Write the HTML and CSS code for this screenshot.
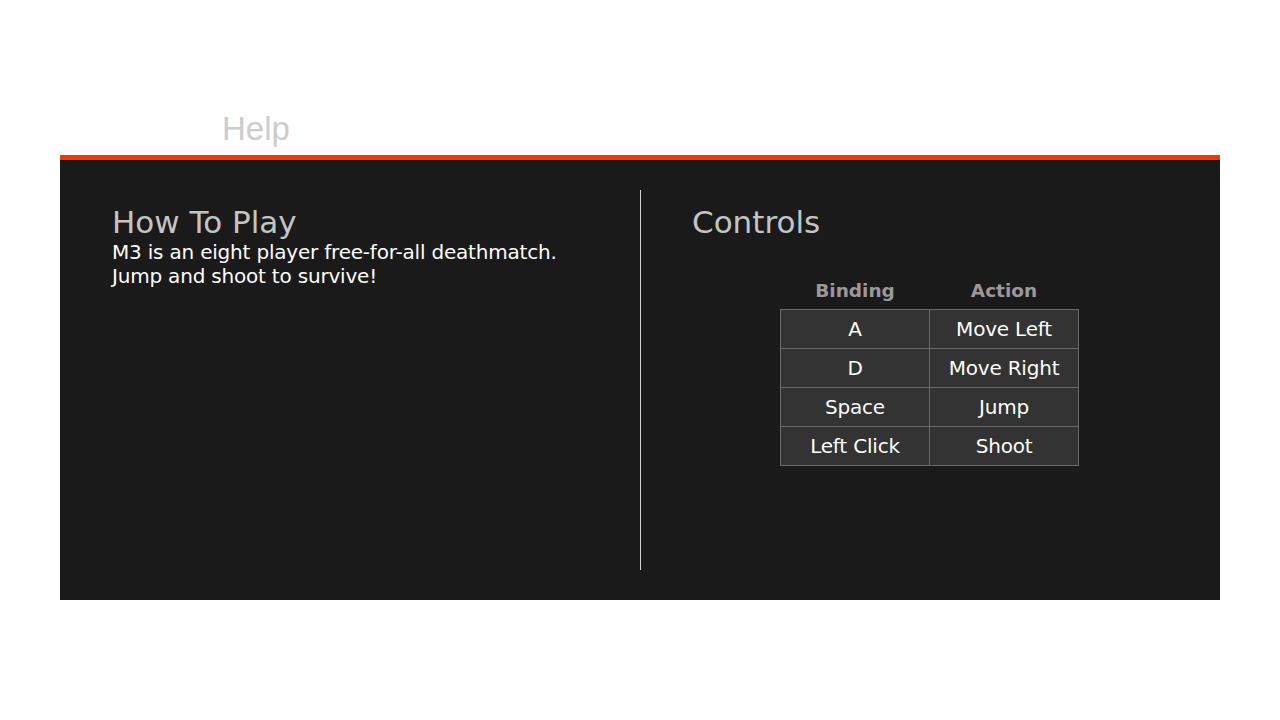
FILE: index.html
```html
<!DOCTYPE html>
<html>
<head>
<meta charset="utf-8">
<link rel="stylesheet" href="styles.css">
</head>
<body>
<div class="page">
  <h1 class="page-title">Help</h1>
  <div class="panel">
    <section class="col col-left">
      <h2 class="col-title">How To Play</h2>
      <p class="desc">M3 is an eight player free-for-all deathmatch.<br>Jump and shoot to survive!</p>
    </section>
    <div class="divider"></div>
    <section class="col col-right">
      <h2 class="col-title">Controls</h2>
      <div class="table-wrap">
        <table class="controls">
          <thead>
            <tr><th>Binding</th><th>Action</th></tr>
          </thead>
          <tbody>
            <tr><td>A</td><td>Move Left</td></tr>
            <tr><td>D</td><td>Move Right</td></tr>
            <tr><td>Space</td><td>Jump</td></tr>
            <tr><td>Left Click</td><td>Shoot</td></tr>
          </tbody>
        </table>
      </div>
    </section>
  </div>
</div>
</body>
</html>
```
FILE: styles.css
```css
html, body {
  margin: 0;
  padding: 0;
  background: #ffffff;
}
body {
  font-family: "DejaVu Sans", "Liberation Sans", sans-serif;
}
.page {
  width: 1160px;
  margin: 0 auto;
  padding-top: 109px;
}
.page-title {
  font-family: "Liberation Sans", Arial, sans-serif;
  font-weight: normal;
  font-size: 33px;
  line-height: 40px;
  color: #cccccc;
  margin: 0 0 6px 162px;
}
.panel {
  display: flex;
  background: #1a1a1a;
  border-top: 5px solid #ff3300;
  height: 380px;
  padding: 30px 0;
}
.col {
  flex: 1;
  padding-left: 52px;
}
.col-right {
  padding-left: 51px;
}
.divider {
  width: 1px;
  background: #d0d0d0;
}
.col-title {
  font-weight: normal;
  font-size: 31px;
  line-height: 36px;
  color: #c4c4c4;
  margin: 14px 0 0 0;
}
.desc {
  margin: 0;
  color: #ffffff;
  font-size: 20px;
  line-height: 24px;
  letter-spacing: -0.2px;
}
.table-wrap {
  display: flex;
  justify-content: center;
  margin-top: 31px;
  margin-left: -53px;
}
.controls {
  border-collapse: collapse;
}
.controls th {
  color: #999999;
  font-size: 18.5px;
  font-weight: bold;
  height: 38px;
  padding: 0;
  vertical-align: middle;
}
.controls td {
  width: 148px;
  height: 38px;
  padding: 0;
  text-align: center;
  background: #333333;
  border: 1px solid #6a6a6a;
  color: #ffffff;
  font-size: 20px;
  letter-spacing: -0.2px;
}
```
